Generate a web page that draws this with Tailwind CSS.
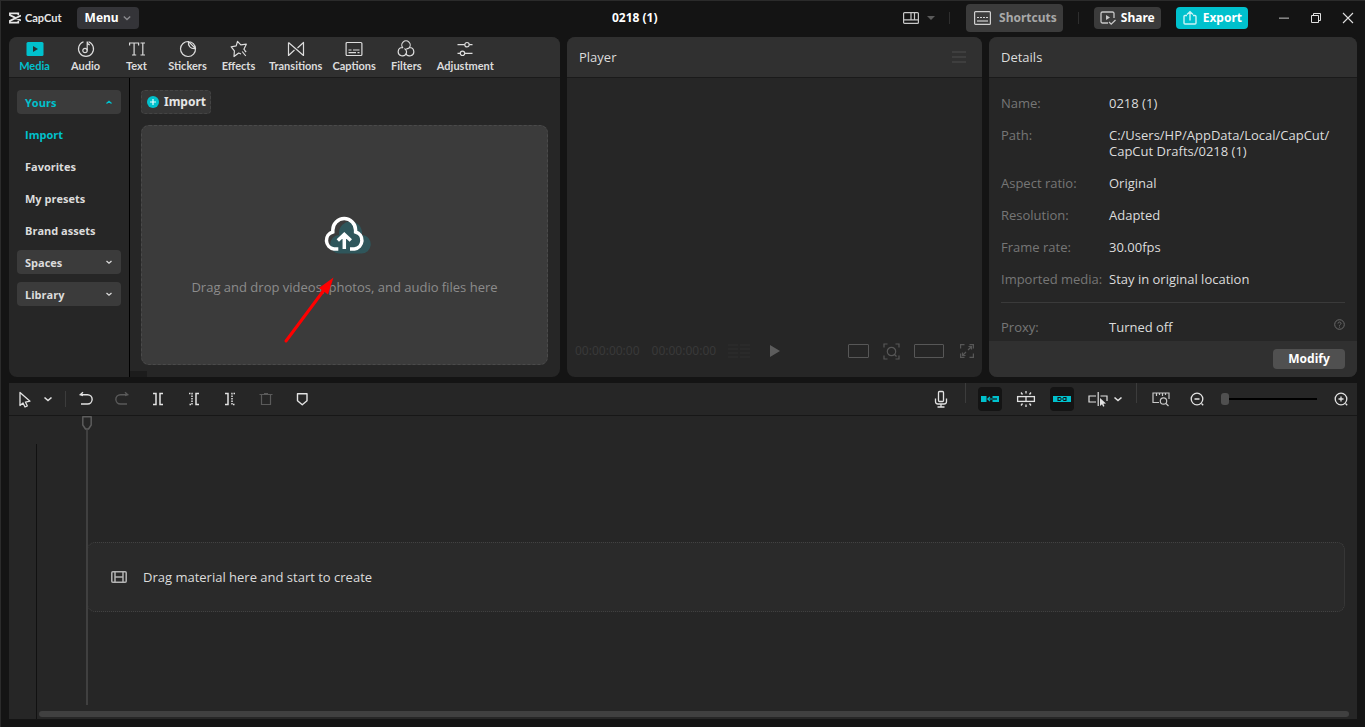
<!DOCTYPE html>
<html lang="en">
  <head>
    <meta charset="UTF-8" />
    <meta name="viewport" content="width=device-width, initial-scale=1.0" />
    <title>CapCut - 0218 (1)</title>
    <script src="https://cdn.jsdelivr.net/npm/@tailwindcss/browser@4"></script>
  </head>

  <body class="h-screen min-h-[640px] flex flex-col bg-[#141414] border-t border-l border-[#2b2b2b] px-2 pb-2 text-[12px] leading-4 text-[#dcdcdc] font-['Noto_Sans','Open_Sans',sans-serif]">
    <!-- Title bar -->
    <header class="grid grid-cols-[25fr_auto_29fr] items-center h-9 shrink-0 pb-0.5">
      <div class="flex items-center gap-[15px]">
        <div class="flex items-center gap-1">
          <svg class="w-3 h-3 text-[#e6e6e6]" viewBox="0 0 12 12" fill="none" stroke="currentColor" stroke-width="1.7">
            <path d="M9.3 3.3V1.3H.9v1.8L12 8.4M9.3 8.7v2H.9V8.9L12 3.6" />
          </svg>
          <span class="text-[11px] font-bold text-[#e6e6e6] font-['Lato',sans-serif]">CapCut</span>
        </div>
        <button class="flex items-center gap-1 h-[22px] px-2 rounded bg-[#343438] font-bold text-white">
          Menu
          <svg class="w-2 h-2 text-[#8a8a8e]" viewBox="0 0 8 8" fill="none" stroke="currentColor" stroke-width="1.4"><path d="M.8 2.5 4 5.5l3.2-3" /></svg>
        </button>
      </div>

      <h1 class="font-bold text-white">0218 (1)</h1>

      <div class="flex items-center justify-end">
        <button class="flex items-center gap-2" aria-label="Layout">
          <svg class="w-4 h-3" viewBox="0 0 16 12" fill="none" stroke="#c8c8c8" stroke-width="1.2">
            <rect x=".6" y=".6" width="14.8" height="10.8" rx="1" />
            <path d="M.6 7.8h14.8M8 .6v7M11.500.6v7" />
          </svg>
          <svg class="w-2 h-1" viewBox="0 0 8 4" fill="#5a5a5a"><path d="M0 0h8L4 4z" /></svg>
        </button>
        <span class="w-px h-3 ml-3.5 mr-4 bg-[#2e2e2e]"></span>
        <button class="flex items-center gap-2 h-7 pl-2 pr-1.5 rounded bg-[#3b3b3b] font-bold text-[#a8a8a8]">
          <svg class="w-[17px] h-[14px]" viewBox="0 0 17 14" fill="none" stroke="#d0d0d0" stroke-width="1.2">
            <rect x=".6" y=".6" width="15.8" height="12.8" rx="1" />
            <path d="M3 6.5h11" stroke-dasharray="2 1" /><path d="M3 10h11" />
          </svg>
          Shortcuts
        </button>
        <span class="w-px h-3 mx-[15px] bg-[#2e2e2e]"></span>
        <button class="flex items-center gap-[5px] h-[22px] px-1.5 rounded bg-[#3b3b3b] font-bold text-white">
          <svg class="w-4 h-4" viewBox="0 0 16 16" fill="none" stroke="#c8c8c8" stroke-width="1.3">
            <path d="M8 13H2.5A1.5 1.5 0 0 1 1 11.500V3.500A1.500 1.500 0 0 1 2.500 2h10A1.500 1.500 0 0 1 14 3.500V8M9 12l2.200 2.200L15.500 10" />
            <path d="M6 5v5l4-2.500z" fill="#c8c8c8" stroke="none" />
          </svg>
          Share
        </button>
        <button class="flex items-center gap-[5px] h-[22px] ml-[15px] px-1.5 rounded bg-[#00c1cd] font-bold text-white">
          <svg class="w-4 h-4" viewBox="0 0 16 16" fill="none" stroke="#c9f4f6" stroke-width="1.4">
            <path d="M5 5.500H3a1 1 0 0 0-1 1V13a1 1 0 0 0 1 1h10a1 1 0 0 0 1-1V6.500a1 1 0 0 0-1-1h-2M8 10.500V2M5 4.500 8 1.700l3 2.800" />
          </svg>
          Export
        </button>
        <div class="flex items-center gap-5 ml-[30px] pr-[3px]">
          <button aria-label="Minimize"><svg class="w-3 h-3" viewBox="0 0 12 12" stroke="#8a8a8a" stroke-width="1.500"><path d="M1 6.200h10" /></svg></button>
          <button aria-label="Restore"><svg class="w-3 h-3" viewBox="0 0 12 12" fill="none" stroke="#e0e0e0" stroke-width="1"><path d="M1.500 3.500h7v7h-7zM3.500 3.500v-2h7v7h-2" /></svg></button>
          <button aria-label="Close"><svg class="w-3 h-3" viewBox="0 0 12 12" stroke="#e0e0e0" stroke-width="1.100"><path d="m1 1 10 10M11 1 1 11" /></svg></button>
        </div>
      </div>
    </header>

    <main class="flex-1 min-h-0 flex flex-col gap-1.5">
      <div class="flex-[340_1_0px] min-h-0 grid grid-cols-[551fr_415fr_368fr] gap-[7px]">
        <!-- Media -->
        <section class="flex flex-col rounded-lg bg-[#262626] overflow-hidden">
          <nav class="flex h-[41px] shrink-0 bg-[#303030] border-b border-[#1a1a1a] text-[11px] font-bold font-['Lato',sans-serif]">
            <button class="flex flex-col items-center pt-[3px] min-w-[51px] px-[5px] text-[#00c1cd]">
              <svg class="w-[18px] h-[18px]" viewBox="0 0 18 18"><rect x=".5" y="2" width="17" height="14" rx="1.500" fill="#00c1cd" /><path d="M7 6v6l5-3z" fill="#263033" /></svg>
              Media
            </button>
            <button class="flex flex-col items-center pt-[3px] min-w-[51px] px-[5px]">
              <svg class="w-[18px] h-[18px]" viewBox="0 0 18 18" fill="none" stroke="currentColor" stroke-width="1.200"><path d="M6.500 1.800a7.500 7.500 0 1 0 5 0" /><circle cx="8" cy="10.500" r="2.200" /><path d="M10.200 10.500V1.500c0 2 1 3 2.600 3.300" /></svg>
              Audio
            </button>
            <button class="flex flex-col items-center pt-[3px] min-w-[51px] px-[5px]">
              <svg class="w-[18px] h-[18px]" viewBox="0 0 18 18" fill="none" stroke="currentColor" stroke-width="1.200"><path d="M1.600 5.500V3h9v2.500M6.100 3v12M4 15h4.200M12.500 3H17M14.800 3v12M12.500 15H17" /></svg>
              Text
            </button>
            <button class="flex flex-col items-center pt-[3px] min-w-[51px] px-[5px]">
              <svg class="w-[18px] h-[18px]" viewBox="0 0 18 18" fill="none" stroke="currentColor" stroke-width="1.200"><path d="M9.500 1.500A7.500 7.500 0 1 0 16.500 8.500zM9.500 1.500c-.8 4.500 2 7.500 7 7M9.500 1.500A7.500 7.500 0 0 1 16.500 8.500" /></svg>
              Stickers
            </button>
            <button class="flex flex-col items-center pt-[3px] min-w-[51px] px-[5px]">
              <svg class="w-[18px] h-[18px]" viewBox="0 0 18 18" fill="none" stroke="currentColor" stroke-width="1.200" stroke-linejoin="round"><path d="M11 14 8.700 13 4 16.500l.4-5.700L1.200 6.800l5-.9L7.500 1.300l3.300 3.500 5.500-.6-2.400 5 2 2.600M12.200 11.500l3.600 4.500M14.800 10.800l1.400 1.200" /></svg>
              Effects
            </button>
            <button class="flex flex-col items-center pt-[3px] min-w-[51px] px-[5px]">
              <svg class="w-[18px] h-[18px]" viewBox="0 0 18 18" fill="none" stroke="currentColor" stroke-width="1.200" stroke-linejoin="round"><path d="M1.500 2.500v13l6-5.500M10.500 8l6-5.500v13L1.500 2.500" /></svg>
              Transitions
            </button>
            <button class="flex flex-col items-center pt-[3px] min-w-[51px] px-[5px]">
              <svg class="w-[18px] h-[18px]" viewBox="0 0 18 18" fill="none" stroke="currentColor" stroke-width="1.200"><rect x="1.100" y="2.500" width="15.800" height="13" rx="1" /><path d="M3.500 10h3M8 10h6.500M3.500 12.700h7.500M12.500 12.700h2" /></svg>
              Captions
            </button>
            <button class="flex flex-col items-center pt-[3px] min-w-[51px] px-[5px]">
              <svg class="w-[18px] h-[18px]" viewBox="0 0 18 18" fill="none" stroke="currentColor" stroke-width="1.200"><path d="M6 8a4.200 4.200 0 1 1 6 0M5.500 7.500a4.200 4.200 0 1 0 3.800 5.800c.6-2-.2-3.800-1.800-4.800M12.500 7.500a4.200 4.200 0 1 1-3.800 5.800M12 8c-.8.600-1.700.9-2.700.9" /></svg>
              Filters
            </button>
            <button class="flex flex-col items-center pt-[3px] min-w-[51px] px-[5px]">
              <svg class="w-[18px] h-[18px]" viewBox="0 0 18 18" fill="none" stroke="currentColor" stroke-width="1.200"><circle cx="11" cy="4.700" r="2.200" /><circle cx="6.500" cy="13.300" r="2.200" /><path d="M1.500 4.700h7.300M13.200 4.700h3.300M1.500 13.300h2.800M8.700 13.300h7.800" /></svg>
              Adjustment
            </button>
          </nav>

          <div class="flex-1 flex">
            <aside class="flex flex-col gap-2 w-[121px] shrink-0 px-2 pt-3 border-r border-black text-[11px] font-bold font-['Open_Sans',sans-serif]">
              <button class="flex items-center justify-between h-6 px-2 pt-0.5 rounded bg-[#3b3b3b] text-[#00c1cd]">
                Yours
                <svg class="w-2 h-2" viewBox="0 0 8 8" fill="none" stroke="currentColor" stroke-width="1.300"><path d="M1.500 4.500 4 2.300 6.500 4.500" /></svg>
              </button>
              <a href="#" class="flex items-center h-6 px-2 pt-0.5 text-[#00c1cd]">Import</a>
              <a href="#" class="flex items-center h-6 px-2 pt-0.5">Favorites</a>
              <a href="#" class="flex items-center h-6 px-2 pt-0.5">My presets</a>
              <a href="#" class="flex items-center h-6 px-2 pt-0.5">Brand assets</a>
              <button class="flex items-center justify-between h-6 px-2 pt-0.5 rounded bg-[#3b3b3b]">
                Spaces
                <svg class="w-2 h-2" viewBox="0 0 8 8" fill="none" stroke="currentColor" stroke-width="1.300"><path d="M1.500 2 4 4.200 6.500 2" /></svg>
              </button>
              <button class="flex items-center justify-between h-6 px-2 pt-0.5 rounded bg-[#3b3b3b]">
                Library
                <svg class="w-2 h-2" viewBox="0 0 8 8" fill="none" stroke="currentColor" stroke-width="1.300"><path d="M1.500 2 4 4.200 6.500 2" /></svg>
              </button>
            </aside>

            <div class="flex-1 flex flex-col">
              <div class="flex-1 flex flex-col items-start gap-[11px] pt-3 pl-[11px] pr-3 pb-1.5">
                <button class="flex items-center gap-1 h-6 px-1 rounded border border-dashed border-[#444444] bg-[#363636] font-bold text-[#e6e6e6]">
                  <svg class="w-3.5 h-3.5" viewBox="0 0 14 14"><circle cx="7" cy="7" r="6" fill="#00c1cd" /><path d="M7 4v6M4 7h6" stroke="#e8ffff" stroke-width="1.200" /></svg>
                  Import
                </button>
                <div class="relative flex-1 flex flex-col items-center self-stretch rounded-lg border border-dashed border-[#4a4a4a] bg-[#3b3b3b] pt-[90px]">
                  <svg class="w-12 h-[38px] ml-1" viewBox="0 0 48 38" fill="none">
                    <path d="M17 37.500a8.700 8.700 0 0 1-1-18.500v-2a11.500 11.500 0 0 1 23 0v2a9 9 0 0 1-1 18.500z" fill="#2f565b" />
                    <path d="M15.300 33H11a8.700 8.700 0 0 1-1.200-17v-2a11.400 11.400 0 0 1 22.800 0v2a8.700 8.700 0 0 1-1.200 17H27M21.300 33V19M14.800 24.500l6.500-6 6.500 6" stroke="#fff" stroke-width="3.500" />
                  </svg>
                  <p class="mt-[25px] text-[13px] text-[#8c8c8c] font-['Open_Sans',sans-serif]">Drag and drop videos, photos, and audio files here</p>
                  <svg class="absolute top-[150px] left-1/2 -ml-[62px] w-[52px] h-[68px]" viewBox="0 0 52 68">
                    <path d="M3 65 41 14" stroke="#ff0000" stroke-width="3" stroke-linecap="round" />
                    <path d="M50.500 1.500 45 18.500l-9-6.500z" fill="#ff0000" />
                  </svg>
                </div>
              </div>
              <div class="w-[17px] h-1.5 bg-[#1c1c1c]"></div>
            </div>
          </div>
        </section>

        <!-- Player -->
        <section class="flex flex-col rounded-lg bg-[#262626] overflow-hidden">
          <div class="flex items-center justify-between h-[41px] shrink-0 pl-3 pr-4 bg-[#303030] border-b border-[#1a1a1a]">
            <h2 class="text-[13px] font-['Open_Sans',sans-serif]">Player</h2>
            <button aria-label="Player menu"><svg class="w-3.5 h-3.5" viewBox="0 0 14 14" stroke="#4c4c4c" stroke-width="1.200"><path d="M0 2h14M0 7h14M0 12h14" /></svg></button>
          </div>
          <div class="flex-1"></div>
          <div class="relative flex items-center justify-between h-[52px] px-2 text-[#393939]">
            <div class="flex items-center gap-3">
              <span>00:00:00:00</span>
              <span>00:00:00:00</span>
              <svg class="w-[22px] h-4" viewBox="0 0 22 16" stroke="#2a2a2a" stroke-width="2"><path d="M0 2h10M12 2h10M0 6h10M12 6h10M0 10h10M12 10h10M0 14h10M12 14h10" /></svg>
            </div>
            <button class="absolute left-1/2 -translate-x-1/2" aria-label="Play"><svg class="w-2.5 h-3" viewBox="0 0 10 12" fill="#5c5c5c"><path d="M0 0v12l10-6z" /></svg></button>
            <div class="flex items-center gap-3.5 text-[#575757]">
              <button aria-label="Quality"><svg class="w-[21px] h-3.5" viewBox="0 0 21 14" fill="none" stroke="currentColor"><rect x=".5" y=".5" width="20" height="13" rx=".5" /></svg></button>
              <button aria-label="Zoom"><svg class="w-[17px] h-[17px]" viewBox="0 0 17 17" fill="none" stroke="currentColor" stroke-width="1.200"><path d="M1 4.500V1h3.500M12.500 1H16v3.500M16 12.500V16h-3.500M4.500 16H1v-3.500M11.500 11.500l2 2" /><circle cx="8.500" cy="8.500" r="4.200" /></svg></button>
              <button aria-label="Ratio"><svg class="w-[30px] h-3.5" viewBox="0 0 30 14" fill="none" stroke="currentColor"><rect x=".5" y=".5" width="29" height="13" rx=".5" /></svg></button>
              <button class="ml-0.5" aria-label="Full screen"><svg class="w-3.5 h-3.5" viewBox="0 0 14 14" fill="none" stroke="currentColor" stroke-width="1.200"><path d="M4.500.6H.6v3.900M9.500.6h3.900v3.900M13.400 9.500v3.900H9.500M4.500 13.400H.6V9.500M8 6l3.500-3.500M8.500 2.500h3v3M6 8l-3.500 3.500M2.500 8.500v3h3" /></svg></button>
            </div>
          </div>
        </section>

        <!-- Details -->
        <section class="flex flex-col rounded-lg bg-[#262626] overflow-hidden">
          <div class="flex items-center h-[41px] shrink-0 px-3 bg-[#303030] border-b border-[#1a1a1a]">
            <h2 class="text-[13px] font-['Open_Sans',sans-serif]">Details</h2>
          </div>
          <div class="flex-1 px-3 pt-[17px] text-[13px] font-['Open_Sans',sans-serif]">
            <dl class="grid grid-cols-[108px_1fr] gap-y-4 pb-[15px] border-b border-[#3a3a3a]">
              <dt class="text-[#767676]">Name:</dt>
              <dd>0218 (1)</dd>
              <dt class="text-[#767676]">Path:</dt>
              <dd>C:/Users/HP/AppData/Local/CapCut/<br />CapCut Drafts/0218 (1)</dd>
              <dt class="text-[#767676]">Aspect ratio:</dt>
              <dd>Original</dd>
              <dt class="text-[#767676]">Resolution:</dt>
              <dd>Adapted</dd>
              <dt class="text-[#767676]">Frame rate:</dt>
              <dd>30.00fps</dd>
              <dt class="text-[#767676] whitespace-nowrap">Imported media:</dt>
              <dd>Stay in original location</dd>
            </dl>
            <dl class="grid grid-cols-[108px_1fr_auto] pt-4">
              <dt class="text-[#767676]">Proxy:</dt>
              <dd>Turned off</dd>
              <dd><svg class="w-[11px] h-[11px]" viewBox="0 0 11 11" fill="none" stroke="#6a6a6a"><circle cx="5.500" cy="5.500" r="4.800" /><path d="M4 4.500c0-2 3-2 3 0 0 1-1.500 1-1.500 2.200M5.500 7.600v1" /></svg></dd>
            </dl>
          </div>
          <div class="flex items-center justify-end h-9 shrink-0 px-3 bg-[#303030]">
            <button class="h-5 w-[72px] rounded bg-[#505050] font-bold text-white">Modify</button>
          </div>
        </section>
      </div>

      <!-- Timeline -->
      <section class="flex-[336_1_0px] min-h-0 flex flex-col bg-[#262626]">
        <div class="flex items-center justify-between h-[33px] shrink-0 px-1 border-b border-[#171717] text-[#e2e2e2]">
          <div class="flex items-center gap-3">
            <button class="flex items-center" aria-label="Select tool">
              <svg class="w-6 h-6" viewBox="0 0 24 24" fill="none" stroke="currentColor" stroke-width="1.300" stroke-linejoin="round"><path d="M7 5.500v13l3-2.500 2 4 2.300-1.200-1.800-3.600 4.500-1z" /></svg>
              <svg class="w-4 h-4 ml-[3px]" viewBox="0 0 16 16" fill="none" stroke="currentColor" stroke-width="1.600"><path d="m4.500 6.500 3.500 3 3.500-3" /></svg>
            </button>
            <span class="w-px h-4 -ml-[3px] -mr-1 bg-[#3c3c3c]"></span>
            <button aria-label="Undo"><svg class="w-6 h-6" viewBox="0 0 24 24" fill="none" stroke="currentColor" stroke-width="1.400"><path d="M6 7.700h7.500a4.600 4.600 0 0 1 0 9.300H7M9 5.200 6.300 7.700 9 8.500" /></svg></button>
            <button aria-label="Redo"><svg class="w-6 h-6" viewBox="0 0 24 24" fill="none" stroke="#5a5a5a" stroke-width="1.400"><path d="M18 7.700h-7.500a4.600 4.600 0 0 0 0 9.300H17M15 5.200l2.700 2.500L15 8.500" /></svg></button>
            <button aria-label="Split"><svg class="w-6 h-6" viewBox="0 0 24 24" fill="none" stroke="currentColor" stroke-width="1.500"><path d="M7 6.500h3v11H7M17 6.500h-3v11h3" /></svg></button>
            <button aria-label="Delete left"><svg class="w-6 h-6" viewBox="0 0 24 24" fill="none" stroke="currentColor" stroke-width="1.500"><path d="M7 6.500h3v11H7" stroke-dasharray="1.500 1" /><path d="M17 6.500h-3v11h3" /></svg></button>
            <button aria-label="Delete right"><svg class="w-6 h-6" viewBox="0 0 24 24" fill="none" stroke="currentColor" stroke-width="1.500"><path d="M7 6.500h3v11H7" /><path d="M17 6.500h-3v11h3" stroke-dasharray="1.500 1" /></svg></button>
            <button aria-label="Delete"><svg class="w-6 h-6" viewBox="0 0 24 24" fill="none" stroke="#5a5a5a" stroke-width="1.200"><path d="M5.500 7.500h13M10 6.500h4M7.500 7.500v10h9v-10" /></svg></button>
            <button aria-label="Marker"><svg class="w-6 h-6" viewBox="0 0 24 24" fill="none" stroke="currentColor" stroke-width="1.400" stroke-linejoin="round"><path d="M7.500 6.800h9.500v7l-4.750 4-4.750-4z" /></svg></button>
          </div>

          <div class="flex items-center gap-3">
            <button aria-label="Record"><svg class="w-6 h-6" viewBox="0 0 24 24" fill="none" stroke="currentColor" stroke-width="1.300"><rect x="9.500" y="4.500" width="5" height="10" rx="1" /><path d="M6.500 11.500v3a2.500 2.500 0 0 0 2.500 2.500h6a2.500 2.500 0 0 0 2.500-2.500v-3M12 17v3M8.500 20h7" /></svg></button>
            <span class="w-px h-5 self-start -mt-1 bg-[#3c3c3c]"></span>
            <button class="rounded bg-[#141414] text-[#00c1cd]" aria-label="Main track magnet"><svg class="w-6 h-6" viewBox="0 0 24 24"><path d="M3 9h5.500v6H3zM14.500 9H21v6h-6.500z" fill="currentColor" /><path d="M12 9.800 9.800 12l2.200 2.200M10 12h4.500" fill="none" stroke="currentColor" stroke-width="1.200" /><path d="M14.500 12h4.500" stroke="#141414" stroke-width="1.200" /></svg></button>
            <button aria-label="Auto snapping"><svg class="w-6 h-6" viewBox="0 0 24 24" fill="none" stroke="currentColor" stroke-width="1.300"><rect x="3.600" y="9.600" width="16.800" height="4.800" /><path d="M12 4v2.500M12 9.500v5M12 17.500V20M7 5.500l1.500 2M17 5.500l-1.500 2M7 18.500l1.500-2M17 18.500l-1.500-2" /></svg></button>
            <button class="rounded bg-[#141414] text-[#00c1cd]" aria-label="Linkage"><svg class="w-6 h-6" viewBox="0 0 24 24"><path d="M3 9h18v6H3z" fill="currentColor" /><path d="M10.800 10.500H8v3h2.800M13.200 10.500H16v3h-2.800M10 12h4" fill="none" stroke="#141414" stroke-width="1.100" /></svg></button>
            <button class="flex items-center -mr-0.5" aria-label="Preview axis">
              <svg class="w-6 h-6" viewBox="0 0 24 24" fill="none" stroke="currentColor" stroke-width="1.200"><path d="M10 9H3v6h7M14.500 9H21v5M12.200 5v14" /><path d="M14 11v8l2-1.800 1.200 2.500 1.300-.7-1.200-2.300 2.700-.3z" fill="currentColor" stroke="none" /></svg>
              <svg class="w-4 h-4" viewBox="0 0 16 16" fill="none" stroke="currentColor" stroke-width="1.600"><path d="m4.500 6.500 3.500 3 3.500-3" /></svg>
            </button>
            <span class="w-px h-5 self-start -mt-1 bg-[#3c3c3c]"></span>
            <button aria-label="Zoom to fit"><svg class="w-6 h-6" viewBox="0 0 24 24" fill="none" stroke="#c8c8c8" stroke-width="1.200"><path d="M10 15.500H4V6h16v6M7.500 6v3M10.500 6v2M13.500 6v3M16.500 6v2" /><circle cx="14.500" cy="14" r="3.200" /><path d="m17 16.500 2.500 2.500" /></svg></button>
            <button aria-label="Zoom out"><svg class="w-6 h-6" viewBox="0 0 24 24" fill="none" stroke="currentColor" stroke-width="1.300"><circle cx="12" cy="12" r="5.800" /><path d="M9.500 12h5M16.500 16.500l1.700 1.700" /></svg></button>
            <input type="range" min="0" max="100" value="0" aria-label="Timeline zoom" class="w-24 h-3 appearance-none bg-transparent [&::-webkit-slider-runnable-track]:h-0.5 [&::-webkit-slider-runnable-track]:bg-black [&::-webkit-slider-thumb]:appearance-none [&::-webkit-slider-thumb]:w-2 [&::-webkit-slider-thumb]:h-3 [&::-webkit-slider-thumb]:-mt-[5px] [&::-webkit-slider-thumb]:rounded-[3px] [&::-webkit-slider-thumb]:bg-[#505050]" />
            <button aria-label="Zoom in"><svg class="w-6 h-6" viewBox="0 0 24 24" fill="none" stroke="currentColor" stroke-width="1.300"><circle cx="12" cy="12" r="5.800" /><path d="M9.500 12h5M12 9.500v5M16.500 16.500l1.700 1.700" /></svg></button>
          </div>
        </div>

        <div class="flex-1 flex">
          <div class="w-7 mt-7 shrink-0 border-r border-[#111111]"></div>
          <div class="relative flex-1 flex flex-col">
            <div class="flex-1 flex flex-col justify-center pl-[50px] pr-3 pt-[27px]">
              <div class="flex items-center gap-4 h-[70px] px-[23px] rounded-lg border border-dotted border-[#424242] bg-[#2a2a2a]">
                <svg class="w-4 h-3" viewBox="0 0 16 12" fill="none" stroke="#b4b4b4" stroke-width="1.500"><rect x=".8" y=".8" width="14.400" height="10.400" rx="1" /><path d="M4 .8v10.400M12 .8v10.400M4 6h8" /></svg>
                <p class="text-[13px] font-['Open_Sans',sans-serif]">Drag material here and start to create</p>
              </div>
            </div>
            <div class="h-1.5 ml-0.5 mr-2 mb-0.5 rounded-full bg-[#404040]"></div>
            <!-- Playhead -->
            <div class="absolute top-0 bottom-3.5 left-11 flex flex-col items-center w-3">
              <svg class="w-3 h-3.5 shrink-0" viewBox="0 0 12 14" fill="none" stroke="#5c5c5c" stroke-width="1.500"><path d="M1.800.8h8.400V9l-2.700 4H4.500L1.800 9z" stroke-linejoin="round" /></svg>
              <div class="flex-1 w-0.5 bg-[#404040]"></div>
            </div>
          </div>
        </div>
      </section>
    </main>
  </body>
</html>
